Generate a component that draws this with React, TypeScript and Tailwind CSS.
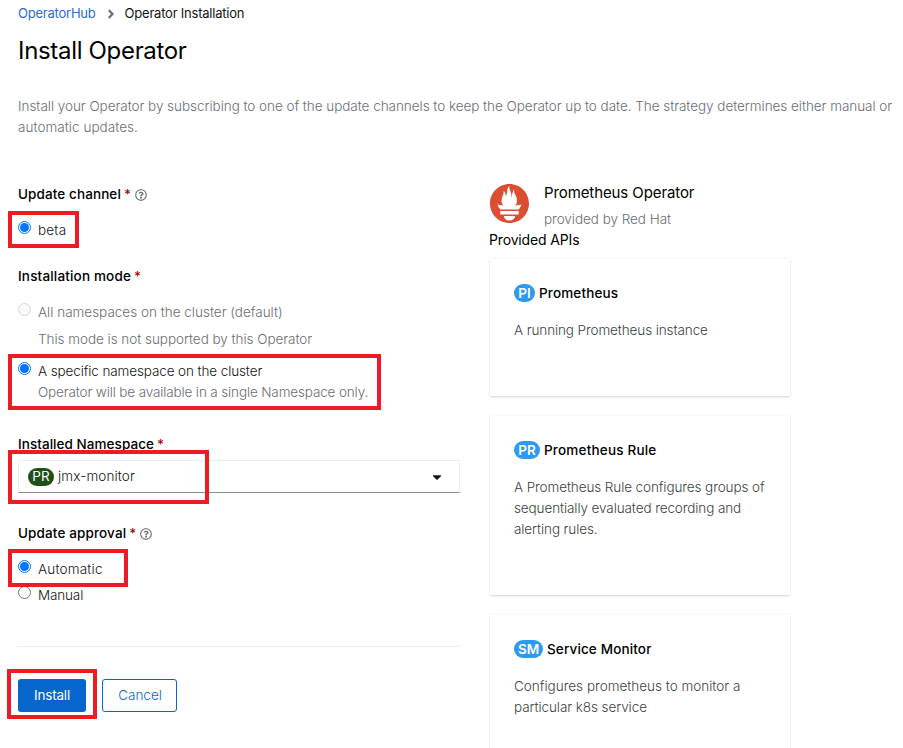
import type { ReactNode } from "react";
import { FaAngleRight, FaCaretDown, FaRegQuestionCircle } from "react-icons/fa";
import { SiPrometheus } from "react-icons/si";

function Highlight({ className }: { className: string }) {
  return <div className={`pointer-events-none absolute border-4 border-[#ed1c24] ${className}`} />;
}

function FieldLabel({ children, help, className }: { children: ReactNode; help?: boolean; className: string }) {
  return (
    <div className={`flex h-[21px] items-center font-medium text-black ${className}`}>
      <span>{children}</span>
      <span className="ml-[3px] tracking-normal text-[#a30000]">*</span>
      {help && <FaRegQuestionCircle className="mt-px ml-[4px] size-3 text-[#6a6e73]" />}
    </div>
  );
}

function Radio({ checked, disabled }: { checked?: boolean; disabled?: boolean }) {
  const ring = checked ? "border-[#0075ff]" : disabled ? "border-[#d5d5d5] bg-[#fafafa]" : "border-[#767676]";
  return (
    <span className={`mt-px flex size-[13px] shrink-0 items-center justify-center rounded-full border ${ring}`}>
      {checked && <span className="size-[9px] rounded-full bg-[#0075ff]" />}
    </span>
  );
}

function ApiCard({ kind, title, titleClass, badgeClass, className, children }: {
  kind: string; title: string; titleClass: string; badgeClass: string; className: string; children: ReactNode;
}) {
  return (
    <div className={`w-[300px] bg-white px-6 pt-[25px] shadow-[0_1px_2px_0_rgba(3,3,3,0.14),0_0_2px_0_rgba(3,3,3,0.08)] ${className}`}>
      <div className="flex h-[18px] items-center">
        <span className={`flex h-[18px] items-center justify-center rounded-full bg-[#2b9af3] font-semibold text-white ${badgeClass}`}>{kind}</span>
        <span className={`ml-[4px] font-medium text-black ${titleClass}`}>{title}</span>
      </div>
      <div className="mt-[18px] whitespace-nowrap text-[#3c3f42]">{children}</div>
    </div>
  );
}

export default function App() {
  return (
    <div className="h-[748px] w-[903px] overflow-hidden bg-white pt-[3px] pl-[18px] font-['Inter',sans-serif] text-[13.5px] leading-[21px] font-light whitespace-nowrap text-[#151515]">
      <nav className="flex h-[21px] items-center text-[13px] font-normal tracking-[-0.22px]">
        <a className="text-[#2b6cc8]">OperatorHub</a>
        <FaAngleRight className="mr-[7px] ml-[8px] size-[14px] text-[#6a6e73]" />
        <span>Operator Installation</span>
      </nav>
      <h1 className="mt-[11px] text-2xl leading-8 font-normal tracking-[-0.32px] text-black">Install Operator</h1>
      <p className="mt-[29px] text-[#6a6e73]">
        <span className="tracking-[-0.04px]">Install your Operator by subscribing to one of the update channels to keep the Operator up to date. The strategy determines either manual or</span>
        <br />
        <span className="tracking-[0.04px]">automatic updates.</span>
      </p>
      <div className="mt-[46px] flex">
        <main className="w-[442px]">
          <FieldLabel help className="tracking-[0.1px]">Update channel</FieldLabel>
          <div className="relative mt-[15px] flex">
            <Radio checked />
            <span className="ml-[7px] tracking-[0.2px]">beta</span>
            <Highlight className="-top-[9px] -left-[10px] h-[37px] w-[71px]" />
          </div>
          <FieldLabel className="mt-[25px] tracking-[0.17px]">Installation mode</FieldLabel>
          <div className="mt-[15px] flex text-[#6a6e73]">
            <Radio disabled />
            <span className="ml-[7px]">All namespaces on the cluster (default)</span>
          </div>
          <div className="mt-[6px] ml-5 tracking-[-0.04px] text-[#6a6e73]">This mode is not supported by this Operator</div>
          <div className="relative mt-[11px]">
            <div className="flex">
              <Radio checked />
              <span className="ml-[7px] tracking-[-0.11px]">A specific namespace on the cluster</span>
            </div>
            <div className="ml-5 tracking-[-0.14px] text-[#6a6e73]">Operator will be available in a single Namespace only.</div>
            <Highlight className="-top-[7px] -left-[10px] h-[56px] w-[373px]" />
          </div>
          <FieldLabel className="mt-[31px] tracking-[0.05px]">Installed Namespace</FieldLabel>
          <div className="relative mt-[5px] flex h-[33px] items-center border border-[#ededed] border-b-[#8a8d90] pl-[9px]">
            <span className="flex h-[18px] w-[26px] items-center justify-center rounded-full bg-[#1e4f18] font-normal text-white">PR</span>
            <span className="ml-1 tracking-[0.12px]">jmx-monitor</span>
            <FaCaretDown className="mr-[15px] ml-auto size-[14px]" />
            <Highlight className="-top-[11px] -left-[11px] h-[54px] w-[201px]" />
          </div>
          <FieldLabel help className="mt-[30px] tracking-[0.13px]">Update approval</FieldLabel>
          <div className="relative mt-[15px] flex">
            <Radio checked />
            <span className="ml-[7px] tracking-[0.2px]">Automatic</span>
            <Highlight className="-top-[10px] -left-[10px] h-[38px] w-[120px]" />
          </div>
          <div className="mt-[5px] flex">
            <Radio />
            <span className="ml-[7px] tracking-[-0.15px]">Manual</span>
          </div>
          <hr className="mt-[40px] border-[#ededed]" />
          <div className="relative mt-[32px] flex gap-4">
            <button className="h-[33px] w-[68px] rounded-[3px] bg-[#0666cc] font-normal tracking-[-0.2px] text-white">Install</button>
            <button className="h-[33px] w-[75px] rounded-[3px] border border-[#0666cc] pl-px text-[#0666cc]">Cancel</button>
            <Highlight className="-top-[10px] -left-[11px] h-[50px] w-[90px]" />
          </div>
        </main>
        <aside className="ml-[30px] w-[300px]">
          <div className="flex h-[46px]">
            <SiPrometheus className="size-[39px] text-[#da4e31]" />
            <div className="ml-[15px]">
              <div className="-mt-[2px] text-[15px] font-normal tracking-[-0.1px] text-black">Prometheus Operator</div>
              <div className="mt-[6px] tracking-[-0.04px] text-[#6a6e73]">provided by Red Hat</div>
            </div>
          </div>
          <div className="-mt-px -ml-px text-[14px] font-normal tracking-[-0.15px] text-black">Provided APIs</div>
          <ApiCard kind="PI" title="Prometheus" titleClass="tracking-[0.14px]" badgeClass="w-[21px]" className="mt-[9px] h-[137px]">
            <span className="tracking-[-0.1px]">A running Prometheus instance</span>
          </ApiCard>
          <ApiCard kind="PR" title="Prometheus Rule" titleClass="tracking-[0.19px]" badgeClass="w-[26px]" className="mt-[20px] h-[179px]">
            <span className="tracking-[-0.1px]">A Prometheus Rule configures groups of<br />sequentially evaluated recording and<br />alerting rules.</span>
          </ApiCard>
          <ApiCard kind="SM" title="Service Monitor" titleClass="tracking-[0.14px]" badgeClass="w-[29px]" className="mt-[20px] h-[160px]">
            Configures prometheus to monitor a<br /><span className="tracking-[-0.08px]">particular k8s service</span>
          </ApiCard>
        </aside>
      </div>
    </div>
  );
}
